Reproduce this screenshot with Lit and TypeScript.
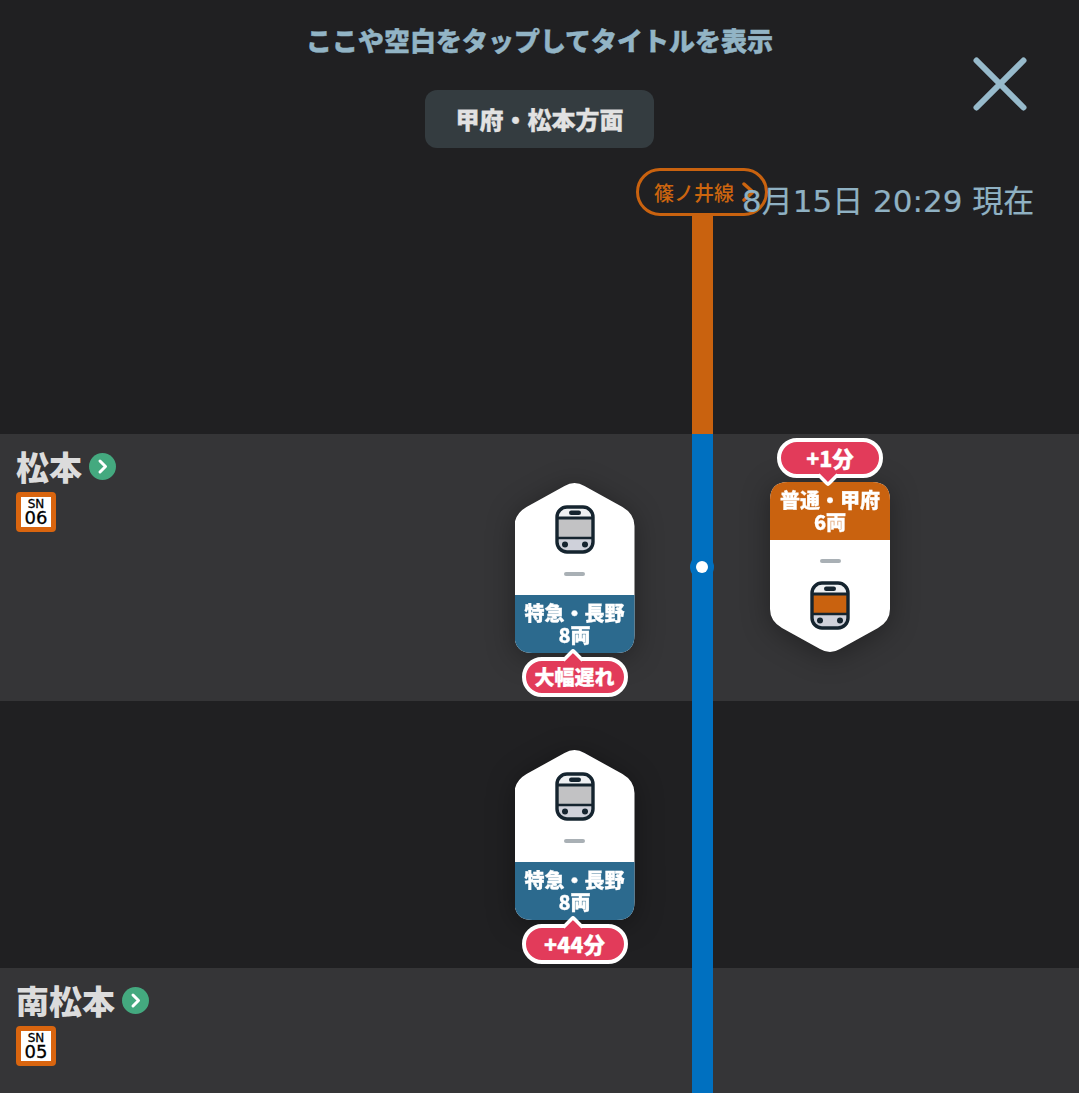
import { LitElement, html, css } from "lit";
import { customElement, property } from "lit/decorators.js";

const FONT = css`"Noto Sans CJK JP", "Noto Sans", sans-serif`;

function trainIcon(mid: string) {
  return html`<svg class="ticon" viewBox="0 0 40 49" width="40" height="49" aria-hidden="true">
    <rect x="2" y="2" width="36" height="45" rx="10" fill="#fff"/>
    <path d="M3 13V12a9 9 0 0 1 9-9h16a9 9 0 0 1 9 9v1z" fill="#eef0f2"/>
    <rect x="3" y="13" width="34" height="20" fill="${mid}"/>
    <path d="M3 33h34v5a8 8 0 0 1-8 8H11a8 8 0 0 1-8-8z" fill="#cfd1da"/>
    <rect x="2" y="2" width="36" height="45" rx="10" fill="none" stroke="#15242f" stroke-width="3.4"/>
    <path d="M2 13h36" stroke="#15242f" stroke-width="3"/>
    <path d="M2 33h36" stroke="#15242f" stroke-width="2.4"/>
    <rect x="14" y="5.5" width="12" height="4.5" rx="2.2" fill="#15242f"/>
    <circle cx="10" cy="39.5" r="3" fill="#15242f"/>
    <circle cx="30" cy="39.5" r="3" fill="#15242f"/>
  </svg>`;
}

@customElement("train-card")
class TrainCard extends LitElement {
  @property() dir = "up";
  @property() label = "";
  @property() cars = "";
  @property() delay = "";
  @property() color = "#2c6a8e";
  @property() mid = "#c2c2c4";

  static styles = css`
    :host { display: block; position: absolute; width: 120px; height: 171px; font-family: ${FONT}; }
    .wrap { width: 120px; height: 171px; filter: drop-shadow(0 4px 14px rgba(0,0,0,.35)); }
    .shape { width: 120px; height: 171px; background: #fff; display: flex; flex-direction: column; align-items: center; }
    .up .shape { clip-path: path("M0 44Q0 32 12 25L50 4Q60 -2 70 4L108 25Q120 32 120 44V153Q120 171 102 171H18Q0 171 0 153Z"); }
    .down .shape { clip-path: path("M0 18Q0 0 18 0H102Q120 0 120 18V127Q120 139 108 146L70 167Q60 173 50 167L12 146Q0 139 0 127Z"); }
    .label { width: 120px; height: 58px; box-sizing: border-box; color: #fff; font-size: 20px; line-height: 22px; font-weight: 900; text-align: center; padding-top: 7px; white-space: nowrap; -webkit-text-stroke: 0.3px #fff; }
    .ticon { display: block; }
    .dash { width: 21px; height: 4px; border-radius: 2px; background: #a9b0b5; }
    .up .ticon { margin-top: 22.5px; }
    .up .dash { margin-top: 18.5px; margin-bottom: 19px; }
    .down .dash { margin-top: 19px; margin-bottom: 18px; }
    .bubble { position: absolute; left: 7px; width: 106px; height: 40px; box-sizing: border-box; background: #e23b5a; border: 4px solid #fff; border-radius: 20px; color: #fff; font-size: 20px; font-weight: 900; line-height: 32px; text-align: center; white-space: nowrap; -webkit-text-stroke: 0.3px #fff; }
    .bubble.num { font-size: 21.5px; }
    .up .bubble { top: 175px; }
    .down .bubble { top: -44px; }
    .notch { position: absolute; left: 50%; width: 12px; height: 12px; margin-left: -10px; background: #e23b5a; transform: rotate(45deg); border-radius: 4px; box-sizing: content-box; }
    .up .notch { top: -10px; border-left: 4px solid #fff; border-top: 4px solid #fff; }
    .down .notch { bottom: -10px; border-right: 4px solid #fff; border-bottom: 4px solid #fff; }
    .text { position: relative; }
  `;

  render() {
    const lab = html`<div class="label" style="background:${this.color}">${this.label}<br />${this.cars}</div>`;
    return html`<div class=${this.dir}>
      <div class="wrap">
        <div class="shape">
          ${this.dir === "up"
            ? html`${trainIcon(this.mid)}<div class="dash"></div>${lab}`
            : html`${lab}<div class="dash"></div>${trainIcon(this.mid)}`}
        </div>
      </div>
      <div class="bubble ${this.delay.startsWith("+") ? "num" : ""}"><span class="notch"></span><span class="text">${this.delay}</span></div>
    </div>`;
  }
}

@customElement("station-row")
class StationRow extends LitElement {
  @property() name = "";
  @property() code = "";
  static styles = css`
    :host { display: block; height: 267px; background: #353537; box-sizing: border-box; padding: 8px 16px 0; font-family: ${FONT}; }
    .name { display: flex; align-items: center; gap: 7px; height: 48px; }
    .n { font-size: 33px; font-weight: 900; color: #dcdcdc; line-height: 48px; }
    .go { display: block; }
    .badge { width: 40px; height: 40px; box-sizing: border-box; border: 5px solid #d9650f; border-radius: 4px; background: #fff; color: #000; display: flex; flex-direction: column; align-items: center; justify-content: center; font-family: "DejaVu Sans", sans-serif; margin-top: 2px; -webkit-text-stroke: 0.3px #000; }
    .sn { font-size: 12px; line-height: 11px; }
    .num { font-size: 18px; line-height: 15px; }
  `;
  render() {
    return html`<div class="name">
        <span class="n">${this.name}</span>
        <svg class="go" width="27" height="27" viewBox="0 0 27 27" aria-hidden="true">
          <circle cx="13.5" cy="13.5" r="13.5" fill="#44a97f"/>
          <path d="M11 8l5.5 5.5L11 19" fill="none" stroke="#fff" stroke-width="3" stroke-linecap="round" stroke-linejoin="round"/>
        </svg>
      </div>
      <div class="badge"><span class="sn">SN</span><span class="num">${this.code}</span></div>`;
  }
}

@customElement("app-root")
class AppRoot extends LitElement {
  static styles = css`
    :host { display: block; position: relative; width: 1079px; height: 1093px; overflow: hidden; background: #202022; font-family: ${FONT}; }
    .top { height: 434px; box-sizing: border-box; padding-top: 21px; display: flex; flex-direction: column; align-items: center; }
    .hint { font-size: 26px; line-height: 38px; font-weight: 900; color: #92b4c5; -webkit-text-stroke: 0.4px #92b4c5; }
    .dir { margin-top: 31px; width: 229px; height: 58px; border-radius: 12px; background: #343c40; color: #e2e2e2; font-size: 24px; font-weight: 900; display: flex; align-items: center; justify-content: center; line-height: 56px; -webkit-text-stroke: 0.3px #e2e2e2; }
    .gap { height: 267px; }
    .close { position: absolute; left: 972px; top: 56px; }
    .now { position: absolute; left: 742px; top: 179px; font-family: "DejaVu Sans", "Noto Sans CJK JP", sans-serif; font-size: 31px; line-height: 44px; color: #8fb1c3; white-space: nowrap; z-index: 3; -webkit-text-stroke: 0.2px #8fb1c3; }
    .tag { position: absolute; left: 636px; top: 168px; width: 132px; height: 48px; box-sizing: border-box; border: 3px solid #c9620f; border-radius: 24px; color: #cc650f; font-size: 20px; font-weight: 500; display: flex; align-items: center; padding-left: 15px; background: #202022; z-index: 2; }
    .chev { position: absolute; right: 9px; top: 11px; }
    .line { position: absolute; left: 692px; width: 21px; }
    .l1 { top: 216px; height: 218px; background: #c9620f; }
    .l2 { top: 434px; height: 659px; background: #0070c0; }
    .pos { position: absolute; left: 690px; top: 555px; width: 24px; height: 24px; border-radius: 50%; background: #0070c0; display: flex; align-items: center; justify-content: center; }
    .pos i { width: 12px; height: 12px; border-radius: 50%; background: #fff; display: block; }
    .t1 { left: 514.5px; top: 482px; }
    .t2 { left: 770px; top: 482px; }
    .t3 { left: 514.5px; top: 749px; }
  `;

  render() {
    return html`
      <div class="top">
        <div class="hint">ここや空白をタップしてタイトルを表示</div>
        <div class="dir">甲府・松本方面</div>
      </div>
      <station-row name="松本" code="06"></station-row>
      <div class="gap"></div>
      <station-row name="南松本" code="05"></station-row>

      <svg class="close" width="56" height="56" viewBox="0 0 56 56" aria-label="閉じる">
        <path d="M4.5 4.5l47 47M51.5 4.5l-47 47" stroke="#97bacb" stroke-width="6" stroke-linecap="round"/>
      </svg>
      <div class="tag">篠ノ井線
        <svg class="chev" width="14" height="20" viewBox="0 0 14 20"><path d="M2 2l9 8-9 8" fill="none" stroke="#cc650f" stroke-width="3.4" stroke-linecap="round" stroke-linejoin="round"/></svg>
      </div>
      <div class="now">8月15日 20:29 現在</div>
      <div class="line l1"></div>
      <div class="line l2"></div>
      <div class="pos"><i></i></div>
      <train-card class="t1" dir="up" label="特急・長野" cars="8両" delay="大幅遅れ" color="#2c6a8e"></train-card>
      <train-card class="t2" dir="down" label="普通・甲府" cars="6両" delay="+1分" color="#c9620f" mid="#c9620f"></train-card>
      <train-card class="t3" dir="up" label="特急・長野" cars="8両" delay="+44分" color="#2c6a8e"></train-card>
    `;
  }
}
